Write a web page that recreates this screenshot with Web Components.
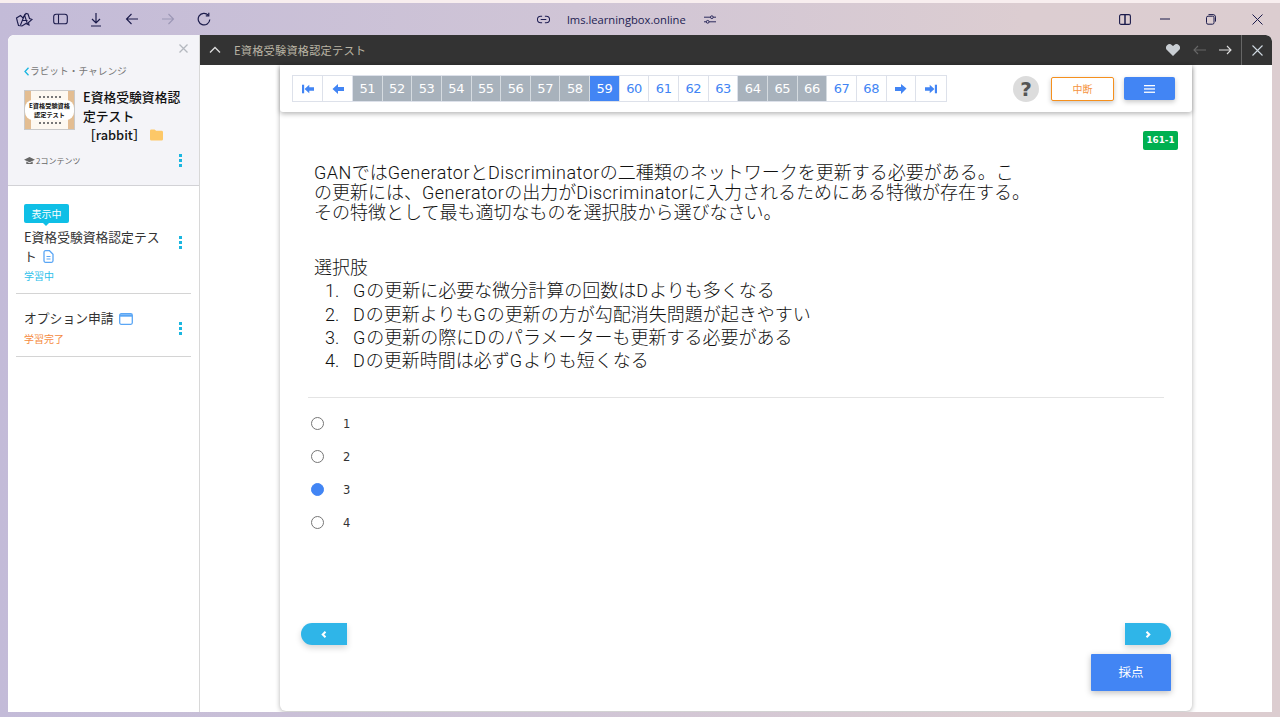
<!DOCTYPE html>
<html lang="ja"><head><meta charset="utf-8"><title>E資格受験資格認定テスト</title>
<style>
html,body{margin:0;padding:0;height:717px;overflow:hidden}
body{background:linear-gradient(90deg,#c3bbd8 0%,#d0c5d6 45%,#dccdd1 80%,#dccdd0 100%);font-family:"Noto Sans CJK JP","Noto Sans",sans-serif;color:#333}
</style></head><body>
<app-shell></app-shell>
<script>
const def=(name,css,html,init)=>{customElements.define(name,class extends HTMLElement{constructor(){super();const r=this.attachShadow({mode:'open'});r.innerHTML=`<style>${css}</style>${typeof html==='function'?html(this):html}`;}});};
const ic=(w,h,vb,inner,extra='')=>`<svg width="${w}" height="${h}" viewBox="${vb}" fill="none" stroke="currentColor" ${extra}>${inner}</svg>`;

def('browser-bar',`:host{display:flex;align-items:center;height:32px;color:#1b1b4b;position:relative}
.b{display:flex;width:36px;justify-content:center;align-items:center;height:32px}
.left{display:flex;margin-left:6px}
.mid{position:absolute;left:537px;top:0;height:32px;display:flex;align-items:center;font:11.2px "Open Sans","Noto Sans",sans-serif;color:#1d1d52}
.mid span{margin:0 18px 0 17px;width:119px;white-space:nowrap}
.right{margin-left:auto;display:flex}
.right .b{width:46px}
.right .b.p{width:34px}
.dim{color:#9c97b5}`,
`<div class="left">
<div class="b">${ic(18,15,'0 0 18 15','<path d="M1.500 6L5.500 3.500 8 6l3-4.500 2 .5 1.500 4.500 2.500 1-3.500 3 .5 2.500-3-1.500-4 2.500-3.500-.5L2.500 10z" stroke-width="1.100"/><path d="M5.500 13L9.500 3l3 9M7 8.500h5.500" stroke-width="1.100"/>')}</div>
<div class="b">${ic(15,12,'0 0 15 12','<rect x=".7" y="1.200" width="13.600" height="9.600" rx="2.400" stroke-width="1.100"/><path d="M5.500 1.500v9" stroke-width="1.100"/>')}</div>
<div class="b">${ic(14,15,'0 0 14 15','<path d="M7 1v9.500M3 7l4 4 4-4M2 14h10" stroke-width="1.200"/>')}</div>
<div class="b">${ic(14,12,'0 0 14 12','<path d="M13 6H1.500M6.500 1l-5 5 5 5" stroke-width="1.100"/>')}</div>
<div class="b dim">${ic(14,12,'0 0 14 12','<path d="M1 6h11.500M7.500 1l5 5-5 5" stroke-width="1.100"/>')}</div>
<div class="b">${ic(14,14,'0 0 14 14','<path d="M11.300 3.200A5.800 5.800 0 1 0 12.800 7.500" stroke-width="1.200"/><path d="M11.800 .8v3h-3" stroke-width="1.200"/>')}</div>
</div>
<div class="mid">${ic(13,9,'0 0 14 9','<path d="M5.500 1H4a3.500 3.500 0 0 0 0 7h1.500M8.500 1H10a3.500 3.500 0 0 1 0 7H8.500M4 4.500h6" stroke-width="1.100"/>')}<span>lms.learningbox.online</span>${ic(12,11,'0 0 13 11','<path d="M0 3h7M10 3h3M0 8h2.500M5.500 8H13" stroke-width="1"/><circle cx="8.500" cy="3" r="1.500" stroke-width="1"/><circle cx="4" cy="8" r="1.500" stroke-width="1"/>')}</div>
<div class="right">
<div class="b p">${ic(12,11,'0 0 12 11','<rect x=".6" y=".6" width="10.800" height="9.800" rx="1.500" stroke-width="1.100"/><path d="M6 1v9" stroke-width="1.500"/>')}</div>
<div class="b">${ic(10,2,'0 0 10 2','<path d="M0 1h10" stroke-width="1"/>')}</div>
<div class="b">${ic(10,11,'0 0 10 11','<rect x=".5" y="2.200" width="7.500" height="8" rx="1.500" stroke-width="1"/><path d="M2.500 .6h4.500a2.500 2.500 0 0 1 2.500 2.500v4.500" stroke-width="1"/>')}</div>
<div class="b">${ic(11,11,'0 0 11 11','<path d="M.5.500l10 10M10.500.500l-10 10" stroke-width="1"/>')}</div>
</div>`);

def('lms-header',`:host{display:flex;align-items:center;height:30px;background:#333;color:#b9b4a4;font-size:11.250px;border-top-right-radius:6px;padding-left:9px;box-sizing:border-box}
.t{margin-left:13px;letter-spacing:.15px}
.r{margin-left:auto;display:flex;align-items:center;color:#ddd;height:30px}
.r svg{display:block}
.x{width:31px;height:30px;border-left:1px solid #666;display:flex;align-items:center;justify-content:center;margin-left:9px;box-sizing:border-box;color:#cfd8e0}`,
`${ic(12,8,'0 0 12 8','<path d="M1 6.500l5-5 5 5" stroke-width="1.300"/>','style="color:#ddd"')}
<span class="t">E資格受験資格認定テスト</span>
<div class="r"><svg width="14" height="12" viewBox="0 0 14 12" fill="#c9ced3"><path d="M7 12L1.200 6.300A3.500 3.500 0 0 1 6 1.200L7 2.100l1-.9a3.500 3.500 0 0 1 4.800 5.100z"/></svg>
<span style="margin-left:13px;color:#666;display:flex">${ic(13,10,'0 0 13 10','<path d="M13 5H1M5 1L1 5l4 4" stroke-width="1.100"/>')}</span>
<span style="margin-left:13px;display:flex">${ic(13,10,'0 0 13 10','<path d="M0 5h12M8 1l4 4-4 4" stroke-width="1.100"/>')}</span>
<div class="x">${ic(11,11,'0 0 11 11','<path d="M.5.500l10 10M10.500.500l-10 10" stroke-width="1.100"/>')}</div></div>`);

def('side-item',`:host{display:block;position:relative;margin:0 8px;border-bottom:1px solid #d4d4d4;box-sizing:border-box;padding-left:8px;color:#333;font-size:12.800px}
.dots{position:absolute;right:9px;top:var(--dt,13px);display:flex;flex-direction:column;gap:2px}
.dots i{width:3px;height:3px;background:#1ab6e0;display:block}
::slotted([slot=status]){display:block;font-size:10px;line-height:14px;margin-top:4px}
.t{line-height:19px;width:148px;word-break:break-all}`,
`<div class="t"><slot></slot></div><slot name="status"></slot><div class="dots" part="dots"><i></i><i></i><i></i></div>`);

def('side-bar',`:host{display:block;width:192px;background:#fff;border-right:1px solid #d8d8d8;box-sizing:border-box;border-top-left-radius:6px;overflow:hidden;flex:none}
.top{height:151px;background:#f4f4f8;border-bottom:1px solid #d2d2d6;box-sizing:border-box;position:relative;padding:29px 16px 0}
.close{position:absolute;right:11px;top:9px;color:#b4b8bf;display:flex}
.crumb{font-size:9.700px;line-height:14px;color:#777;display:flex;align-items:center}
.crumb b{color:#1ab6e0;font-weight:400;margin-right:1px;display:flex}
.row{display:flex;margin-top:10px}
.thumb{width:51px;height:40px;flex:none;background:linear-gradient(90deg,transparent 6px,#fdf8f0 6px,#fdf8f0 43px,transparent 43px),#e3bd92;border:1px solid #c9c9c9;box-sizing:border-box;display:flex;flex-direction:column;align-items:center;justify-content:center;margin-top:2px;gap:2px}
.thumb .c{background:#fff;border-radius:8px;font:700 6.200px/9px "Noto Sans CJK JP",sans-serif;color:#111;text-align:center;width:100%;white-space:nowrap;padding:1px 0}
.thumb u{display:block;height:2px;width:22px;background:repeating-linear-gradient(90deg,#777 0 2px,transparent 2px 4px)}
.name{margin-left:8px;width:100px;font-size:12.800px;line-height:18.500px;color:#111;font-weight:500;word-break:break-all}
.name .l2{display:flex;align-items:center;white-space:nowrap}
.foot{position:absolute;left:16px;top:120px;font-size:8px;color:#666;display:flex;align-items:center;gap:1px}
.dots{position:absolute;right:17px;top:119px;display:flex;flex-direction:column;gap:2px}
.dots i{width:3px;height:3px;background:#1ab6e0;display:block}
.tag{position:relative;background:#0fbfe6;color:#fff;font-size:10px;line-height:19px;height:19px;width:45px;text-align:center;border-radius:2px}
.tag:after{content:"";position:absolute;left:19px;top:19px;border:3.500px solid transparent;border-top-color:#0fbfe6;border-bottom:0}
.wrap{padding:18px 0 0 16px;display:flex}
.one{height:71px;padding-top:4px}
.two{height:63px;padding-top:14px;--dt:28px}
.blue{color:#2cc0ea}.orange{color:#f58a40;margin-top:5px}`,
`<div class="top"><div class="close">${ic(9,9,'0 0 9 9','<path d="M.5.500l8 8M8.500.500l-8 8" stroke-width="1.300"/>')}</div>
<div class="crumb"><b>${ic(5,9,'0 0 5 9','<path d="M4.500.700L1 4.500l3.500 3.800" stroke-width="1.300"/>')}</b>ラビット・チャレンジ</div>
<div class="row"><div class="thumb"><u></u><div class="c">E資格受験資格<br>認定テスト</div><u></u></div>
<div class="name">E資格受験資格認定テスト<div class="l2" style="margin-top:.5px">［rabbit］<svg style="margin-left:4px" width="13" height="12" viewBox="0 0 14 12" fill="#fdc868"><path d="M0 1.500A1.500 1.500 0 0 1 1.500 0h3.500l1.500 1.500h6A1.500 1.500 0 0 1 14 3v7.500a1.500 1.500 0 0 1-1.500 1.500h-11A1.500 1.500 0 0 1 0 10.500z"/></svg></div></div></div>
<div class="foot"><svg width="11" height="8" viewBox="0 0 11 8" fill="#666"><path d="M5.500 0L11 2.700 5.500 5.300 0 2.700zM2.300 4.600l3.200 1.600 3.200-1.600V7H2.300z"/></svg>2コンテンツ</div>
<div class="dots"><i></i><i></i><i></i></div></div>
<div class="wrap"><div class="tag">表示中</div></div>
<side-item class="one"><span>E資格受験資格認定テスト <svg style="vertical-align:-2px;margin-left:3px" width="11" height="13" viewBox="0 0 11 13" fill="none" stroke="#5aa6f5" stroke-width="1.300"><path d="M1 2.200A1.500 1.500 0 0 1 2.500.700h4l3.500 3.500v6.600a1.500 1.500 0 0 1-1.500 1.500h-6A1.500 1.500 0 0 1 1 10.800z"/><path d="M3.500 6.500h4M3.500 9h4" stroke-width="1"/></svg></span><span slot="status" class="blue">学習中</span></side-item>
<side-item class="two"><span>オプション申請 <svg style="vertical-align:-2px;margin-left:3px" width="14" height="12" viewBox="0 0 14 12" fill="none" stroke="#5aa6f5" stroke-width="1.300"><rect x=".7" y=".7" width="12.600" height="10.600" rx="1.500"/><path d="M1 2.500h12" stroke-width="2.400"/></svg></span><span slot="status" class="orange">学習完了</span></side-item>`);

def('page-nav',`:host{display:grid;grid-template-columns:30px 30px repeat(18,29.65px) 1fr 1fr;width:655px;height:27px;border:1px solid #dde1ea;box-sizing:border-box;font:13px/25px "DejaVu Sans",Verdana,sans-serif;color:#4285f4;background:#fff}
div{border-right:1px solid #dde1ea;text-align:center;display:flex;align-items:center;justify-content:center;letter-spacing:-.4px}
div:last-child{border-right:0}
.g{background:#a8b2bc;color:#fff;border-right-color:#d5dbe0}
.a{background:#4285f4;color:#fff}`,
()=>{const f='fill="#4285f4"';const L=`<path d="M7 1v3h6v4H7v3L1.500 6z" ${f}/>`;const R=`<path d="M7 1v3H1v4h6v3l5.500-5.500z" ${f}/>`;
let s=`<div><svg width="12" height="12" viewBox="0 0 14 12"><rect x="0" y="1" width="2.500" height="10" ${f}/><path d="M8.500 1v3H14v4H8.500v3L3 6z" ${f}/></svg></div><div><svg width="14" height="12" viewBox="0 0 14 12">${L}</svg></div>`;
for(let n=51;n<=68;n++){const c=n===59?'a':(n<=58||(n>=64&&n<=66))?'g':'';s+=`<div class="${c}">${n}</div>`}
s+=`<div><svg width="14" height="12" viewBox="0 0 14 12">${R}</svg></div><div><svg width="12" height="12" viewBox="0 0 14 12"><path d="M5.500 1v3H0v4h5.500v3L11 6z" ${f}/><rect x="11.500" y="1" width="2.500" height="10" ${f}/></svg></div>`;return s});

def('quiz-toolbar',`:host{display:flex;align-items:center;height:47px;background:#fff;box-shadow:0 2px 5px rgba(0,0,0,.28);border-bottom-left-radius:3px;border-bottom-right-radius:3px;padding:0 17px 0 12px;box-sizing:border-box;position:relative}
.help{width:26px;height:26px;border-radius:50%;background:#dcdcdc;color:#555;font:700 20px/26px "DejaVu Sans",sans-serif;text-align:center;margin-left:auto}
.stop{width:63px;height:24px;margin-left:12px;border:1px solid #f5901e;border-radius:2px;box-sizing:border-box;color:#f59340;font-size:10px;line-height:21px;text-align:center;box-shadow:0 2px 5px rgba(0,0,0,.22);background:#fff}
.menu{width:51px;height:23px;margin-left:10px;background:#4285f4;border-radius:2px;display:flex;align-items:center;justify-content:center;box-shadow:0 2px 5px rgba(0,0,0,.22)}`,
`<page-nav></page-nav><div class="help">?</div><div class="stop">中断</div><div class="menu"><svg width="11" height="8" viewBox="0 0 11 8" fill="#fff"><rect y="0" width="11" height="1.300"/><rect y="3.300" width="11" height="1.300"/><rect y="6.600" width="11" height="1.300"/></svg></div>`);

def('radio-opt',`:host{display:flex;align-items:center;height:33px;font:11.500px "DejaVu Sans",sans-serif;color:#333}
i{width:13px;height:13px;border-radius:50%;border:1px solid #767676;box-sizing:border-box;display:block;margin-right:19px;background:#fff}
:host([checked]) i{background:#4285f4;border-color:#4285f4}`,`<i></i><slot></slot>`);

def('side-tab',`:host{display:flex;width:46px;height:22px;background:#2fb5e8;align-items:center;justify-content:center;box-shadow:0 3px 6px rgba(0,0,0,.16)}
:host([dir=l]){border-radius:11px 0 0 11px}
:host([dir=r]){border-radius:0 11px 11px 0}`,
(h)=>`<svg width="6" height="7" viewBox="0 0 6 7" fill="none" stroke="#fff" stroke-width="2"><path d="${h.getAttribute('dir')==='l'?'M4.500 .7L1.700 3.500l2.800 2.800':'M1.500 .7l2.800 2.800-2.800 2.800'}"/></svg>`);

def('quiz-card',`:host{display:flex;flex-direction:column;width:912px;height:646px;background:#fff;box-shadow:0 1px 5px rgba(0,0,0,.3);border-radius:0 0 6px 6px;box-sizing:border-box}
.badgebar{display:flex;justify-content:flex-end;padding:19px 14px 0 0}
.badge{width:35px;height:19px;background:#00b050;color:#fff;border-radius:2px;font:700 8.800px/19px "DejaVu Sans",sans-serif;text-align:center}
.q{margin:13px 0 0 34px;width:760px;font-family:Roboto,"Noto Sans CJK JP",sans-serif;font-size:18px;line-height:20px;font-weight:300;color:#111;white-space:nowrap}
.q p{margin:0}
.q b{font-weight:300;letter-spacing:.47px}
.q li b{letter-spacing:1px}
.sel{margin-top:33px;line-height:23.300px}
ol{margin:0;padding:0 0 0 39px;list-style:none}
ol li{position:relative}
ol li:before{content:attr(data-n) ".";position:absolute;left:-28px}
hr{border:0;border-top:1px solid #e4e4e4;margin:25px 28px 0;}
.opts{padding:9px 0 0 31px}
.nav{display:flex;justify-content:space-between;margin:84px 21px 0}
.go{display:flex;justify-content:flex-end;margin:9px 21px 0}
.go div{width:80px;height:37px;background:#4285f4;color:#fff;font-size:12.500px;line-height:36px;text-align:center;border-radius:1px;box-shadow:0 2px 6px rgba(0,0,0,.25)}`,
`<quiz-toolbar></quiz-toolbar>
<div class="badgebar"><div class="badge">161-1</div></div>
<div class="q"><p><b>GAN</b>では<b>Generator</b>と<b>Discriminator</b>の二種類のネットワークを更新する必要がある。こ</p><p>の更新には、<b>Generator</b>の出力が<b>Discriminator</b>に入力されるためにある特徴が存在する。</p><p>その特徴として最も適切なものを選択肢から選びなさい。</p>
<div class="sel"><p>選択肢</p><ol><li data-n="1"><b>G</b>の更新に必要な微分計算の回数は<b>D</b>よりも多くなる</li><li data-n="2"><b>D</b>の更新よりも<b>G</b>の更新の方が勾配消失問題が起きやすい</li><li data-n="3"><b>G</b>の更新の際に<b>D</b>のパラメーターも更新する必要がある</li><li data-n="4"><b>D</b>の更新時間は必ず<b>G</b>よりも短くなる</li></ol></div></div>
<hr>
<div class="opts"><radio-opt>1</radio-opt><radio-opt>2</radio-opt><radio-opt checked>3</radio-opt><radio-opt>4</radio-opt></div>
<div class="nav"><side-tab dir="l"></side-tab><side-tab dir="r"></side-tab></div>
<div class="go"><div>採点</div></div>`);

def('app-shell',`:host{display:flex;flex-direction:column;height:717px}
.strip{height:3px;background:#f8eeef}
.win{display:flex;height:677px;margin:0 8px;background:#fff;border-radius:6px 6px 0 0;overflow:hidden}
.main{flex:1;display:flex;flex-direction:column;min-width:0}
.area{flex:1;background:#fff;padding:0 80px}`,
`<div class="strip"></div><browser-bar></browser-bar>
<div class="win"><side-bar></side-bar><div class="main"><lms-header></lms-header><div class="area"><quiz-card></quiz-card></div></div></div>`);
</script>
</body></html>
